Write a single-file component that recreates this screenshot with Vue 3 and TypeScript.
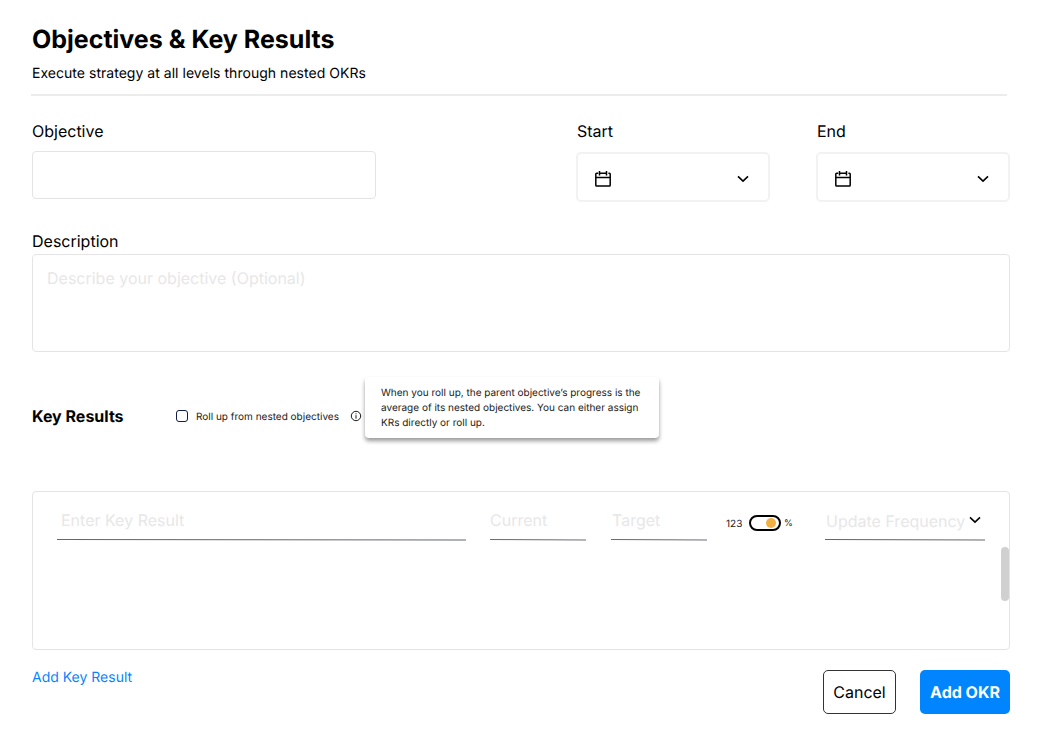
<template>
  <main class="okr-form">
    <header class="header">
      <h1>Objectives &amp; Key Results</h1>
      <p>Execute strategy at all levels through nested OKRs</p>
    </header>

    <section class="top-row">
      <div class="form-group objective">
        <label for="objective">Objective</label>
        <input id="objective" v-model="objective" type="text" />
      </div>
      <div v-for="date in dates" :key="date" class="form-group date">
        <span class="label">{{ date }}</span>
        <button type="button" class="date-select" :aria-label="date">
          <svg class="calendar" width="18" height="18" viewBox="0 0 18 18">
            <path d="M4.2 3.2H2.6Q1.8 3.2 1.8 4V15.2Q1.8 16 2.6 16H15.4Q16.2 16 16.2 15.2V4Q16.2 3.2 15.4 3.2H14.4M6.2 3.2H11.8M1.8 7.6H16.2M5.5 1V5.4M12.5 1V5.4" />
          </svg>
          <svg class="chevron" width="12" height="8" viewBox="0 0 12 8">
            <path d="M1 1.4L6 6.2L11 1.4" />
          </svg>
        </button>
      </div>
    </section>

    <section class="form-group description">
      <label for="description">Description</label>
      <textarea id="description" v-model="description" placeholder="Describe your objective (Optional)"></textarea>
    </section>

    <section class="roll-row">
      <h2>Key Results</h2>
      <label class="roll-up">
        <input v-model="rollUp" type="checkbox" />
        <span>Roll up from nested objectives</span>
      </label>
      <div class="info">
        <svg width="12" height="12" viewBox="0 0 12 12">
          <circle cx="6" cy="6" r="4.7" />
          <path d="M6 5.2V8.7M6 3.3V4.3" />
        </svg>
        <div class="tooltip">
          When you roll up, the parent objective’s progress is the average of its nested objectives. You can either assign KRs directly or roll up.
        </div>
      </div>
    </section>

    <section class="results">
      <div v-for="field in fields" :key="field.name" class="field" :class="field.name">
        <input v-model="field.value" type="text" :placeholder="field.placeholder" />
        <svg class="underline" viewBox="0 0 100 3" preserveAspectRatio="none">
          <path d="M0 1.5L100 2" />
        </svg>
      </div>
      <div class="unit">
        <span class="number">123</span>
        <button type="button" class="toggle" :class="{ on: percent }" aria-label="Unit" @click="percent = !percent">
          <span class="knob"></span>
        </button>
        <span class="percent">%</span>
      </div>
      <div class="field frequency">
        <div class="frequency-value">
          <span>Update Frequency</span>
          <svg class="chevron" width="12" height="8" viewBox="0 0 12 8">
            <path d="M1 1.4L6 6.2L11 1.4" />
          </svg>
        </div>
        <svg class="underline" viewBox="0 0 100 3" preserveAspectRatio="none">
          <path d="M0 1.5L100 2" />
        </svg>
      </div>
      <span class="scrollbar"></span>
    </section>

    <footer class="footer">
      <a class="add-result">Add Key Result</a>
      <div class="actions">
        <button type="button" class="cancel">Cancel</button>
        <button type="button" class="submit">Add OKR</button>
      </div>
    </footer>
  </main>
</template>

<script setup lang="ts">
import { reactive, ref } from 'vue'

interface Field {
  name: string
  placeholder: string
  value: string
}

const dates: string[] = ['Start', 'End']
const objective = ref('')
const description = ref('')
const rollUp = ref(false)
const percent = ref(true)

const fields = reactive<Field[]>([
  { name: 'result', placeholder: 'Enter Key Result', value: '' },
  { name: 'current', placeholder: 'Current', value: '' },
  { name: 'target', placeholder: 'Target', value: '' },
])
</script>

<style>
body {
  margin: 0;
  background: #fff;
}
</style>

<style scoped>
* {
  box-sizing: border-box;
}

.okr-form {
  width: 1037px;
  height: 744px;
  padding: 24px 27px 0 32px;
  font-family: Inter, sans-serif;
  font-size: 16px;
  color: #000;
  text-rendering: geometricPrecision;
  overflow: hidden;
}

input,
textarea,
button {
  font: inherit;
  color: inherit;
  text-rendering: inherit;
  margin: 0;
  background: #fff;
}

h1,
h2,
p {
  margin: 0;
}

.header {
  height: 72px;
  margin: 0 3px 0 -1px;
  padding-left: 1px;
  border-bottom: 2px solid #ececec;
}

h1 {
  font-size: 25px;
  line-height: 32px;
  font-weight: 700;
}

.header p {
  margin-top: 9px;
  font-size: 14px;
  line-height: 18px;
  letter-spacing: 0.03px;
}

.top-row {
  display: flex;
  padding-top: 25px;
  height: 135px;
}

.form-group {
  display: flex;
  flex-direction: column;
}

.form-group label,
.label {
  line-height: 20px;
}

.objective {
  width: 344px;
  margin-right: 200px;
}

.objective input {
  height: 48px;
  margin-top: 10px;
  border: 1px solid #e4e4e4;
  border-radius: 4px;
}

.date {
  width: 194px;
}

.date + .date {
  margin-left: 46px;
}

.date .label {
  padding-left: 1px;
}

.date-select {
  display: flex;
  align-items: center;
  justify-content: space-between;
  height: 50px;
  margin-top: 11px;
  padding: 4px 19px 0 16px;
  border: 2px solid #f2f2f2;
  border-radius: 5px;
}

.calendar,
.chevron {
  fill: none;
  stroke: #000;
  stroke-width: 1.5;
}

.chevron {
  stroke-width: 1.6;
}

.description textarea {
  height: 98px;
  margin-top: 3px;
  padding: 13px 14px;
  border: 1px solid #e4e4e4;
  border-radius: 4px;
  line-height: 20px;
  resize: none;
}

::placeholder {
  color: #e7e7e7;
  opacity: 1;
}

.roll-row {
  display: flex;
  align-items: center;
  height: 24px;
  margin-top: 52px;
}

h2 {
  width: 144px;
  font-size: 16px;
  line-height: 20px;
  font-weight: 700;
}

.roll-up {
  display: flex;
  align-items: center;
  font-size: 10px;
}

.roll-up input {
  appearance: none;
  width: 12px;
  height: 12px;
  margin-right: 8px;
  border: 1px solid #101c4c;
  border-radius: 3px;
}

.roll-up span {
  width: 143px;
  padding-top: 2px;
  white-space: nowrap;
}

.info {
  position: relative;
  display: flex;
  margin-left: 11px;
}

.info svg {
  fill: none;
  stroke: #000;
  stroke-width: 0.9;
}

.tooltip {
  position: absolute;
  top: -33px;
  left: 15px;
  width: 294px;
  height: 61px;
  padding: 9px 16px 7px;
  font-size: 10px;
  line-height: 15px;
  background: #fff;
  border-radius: 4px;
  box-shadow: 0 3px 4px rgba(0, 0, 0, 0.4);
}

.roll-up span,
.tooltip,
.unit {
  color: #1a1a1a;
}

.results {
  position: relative;
  display: flex;
  height: 159px;
  margin-top: 63px;
  padding: 18px 24px 0;
  border: 1px solid #e4e4e4;
  border-radius: 4px;
}

.field {
  display: flex;
  flex-direction: column;
}

.field input {
  width: 100%;
  height: 20px;
  padding: 0 0 0 4px;
  border: 0;
  outline: 0;
}

.result {
  width: 409px;
}

.current,
.target {
  width: 96px;
  margin-left: 24px;
}

.target {
  margin-left: 25px;
}

.current input {
  padding-left: 0;
}

.target input {
  padding-left: 1px;
}

.underline {
  width: 100%;
  height: 3px;
  margin-top: 8px;
  fill: none;
  stroke: #656574;
  stroke-width: 1;
}

.unit {
  display: flex;
  align-items: center;
  height: 16px;
  margin: 5px 0 0 19px;
  font-size: 10px;
}

.number {
  width: 23px;
  padding-top: 2px;
}

.toggle {
  display: flex;
  align-items: center;
  width: 32px;
  height: 16px;
  padding: 0 1px;
  border: 2px solid #000;
  border-radius: 8px;
}

.toggle.on {
  justify-content: flex-end;
  padding-right: 3px;
}

.knob {
  width: 10px;
  height: 10px;
  border-radius: 50%;
  background: #f2b044;
}

.percent {
  width: 12px;
  padding-left: 3px;
  font-size: 9px;
}

.frequency {
  width: 160px;
  margin-left: auto;
}

.frequency-value {
  display: flex;
  justify-content: space-between;
  height: 20px;
  padding: 1px 4px 0 1px;
  line-height: 20px;
  color: #e7e7e7;
  white-space: nowrap;
}

.frequency-value .chevron {
  flex-shrink: 0;
  margin-top: 5px;
}

.scrollbar {
  position: absolute;
  top: 55px;
  right: 0;
  width: 8px;
  height: 54px;
  border-radius: 4px;
  background: #d0d0d0;
}

.footer {
  display: flex;
  justify-content: space-between;
  padding-top: 20px;
}

.add-result {
  margin-top: -1px;
  font-size: 14px;
  line-height: 18px;
  color: #0a84ff;
}

.actions {
  display: flex;
  gap: 24px;
}

.actions button {
  height: 44px;
  padding: 0;
  border-radius: 5px;
}

.cancel {
  width: 73px;
  border: 1px solid #333;
}

.actions .submit {
  width: 90px;
  border: 0;
  font-weight: 700;
  color: #fff;
  background: #0085ff;
}
</style>
